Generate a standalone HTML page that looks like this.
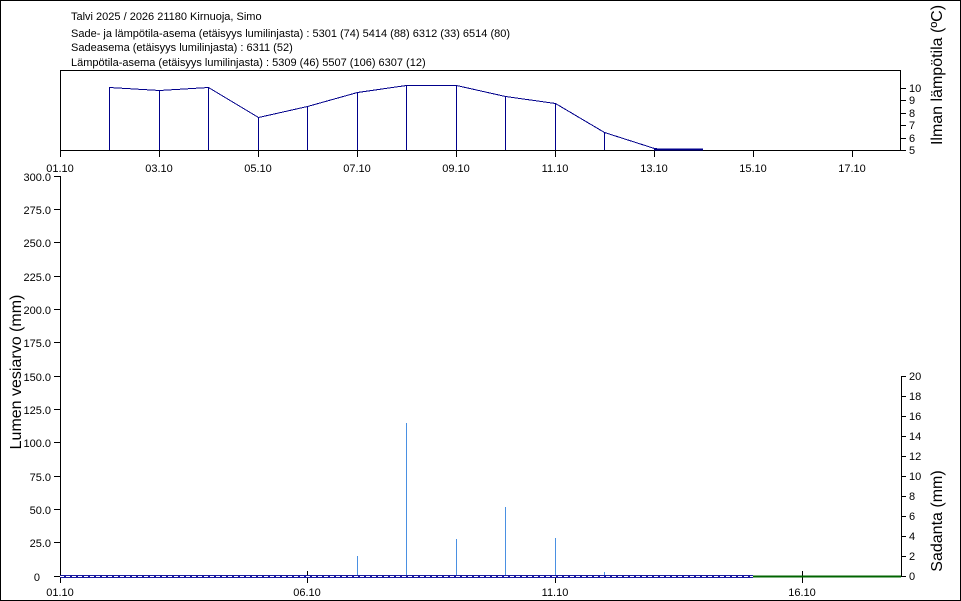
<!DOCTYPE html>
<html><head><meta charset="utf-8"><style>
html,body{margin:0;padding:0;background:#fff}
svg{display:block}
text{font-family:"Liberation Sans",sans-serif;fill:#000}
line,rect{shape-rendering:crispEdges}
</style></head><body>
<svg width="961" height="601" viewBox="0 0 961 601" xmlns="http://www.w3.org/2000/svg" font-size="11">
<rect x="0.5" y="0.5" width="960" height="600" fill="#fff" stroke="#000"/>
<g font-size="11">
<text x="71" y="20">Talvi 2025 / 2026 21180 Kirnuoja, Simo</text>
<text x="71" y="37">Sade- ja lämpötila-asema (etäisyys lumilinjasta) :  5301 (74) 5414 (88) 6312 (33) 6514 (80)</text>
<text x="71" y="51">Sadeasema (etäisyys lumilinjasta) :  6311 (52)</text>
<text x="71" y="66">Lämpötila-asema (etäisyys lumilinjasta) :  5309 (46) 5507 (106) 6307 (12)</text>
</g>
<rect x="60.5" y="70.5" width="840" height="80" fill="none" stroke="#000"/>
<g stroke="#000">
<line x1="60.5" y1="150" x2="60.5" y2="157"/><line x1="159.5" y1="150" x2="159.5" y2="157"/><line x1="258.5" y1="150" x2="258.5" y2="157"/><line x1="357.5" y1="150" x2="357.5" y2="157"/><line x1="456.5" y1="150" x2="456.5" y2="157"/><line x1="555.5" y1="150" x2="555.5" y2="157"/><line x1="654.5" y1="150" x2="654.5" y2="157"/><line x1="753.5" y1="150" x2="753.5" y2="157"/><line x1="852.5" y1="150" x2="852.5" y2="157"/>
<line x1="901" y1="88.5" x2="906" y2="88.5"/><line x1="901" y1="100.5" x2="906" y2="100.5"/><line x1="901" y1="113.5" x2="906" y2="113.5"/><line x1="901" y1="125.5" x2="906" y2="125.5"/><line x1="901" y1="138.5" x2="906" y2="138.5"/><line x1="901" y1="150.5" x2="906" y2="150.5"/>
</g>
<g text-anchor="middle">
<text x="60" y="172">01.10</text><text x="159" y="172">03.10</text><text x="258" y="172">05.10</text><text x="357" y="172">07.10</text><text x="456" y="172">09.10</text><text x="555" y="172">11.10</text><text x="654" y="172">13.10</text><text x="753" y="172">15.10</text><text x="852" y="172">17.10</text>
</g>
<g>
<text x="909" y="92">10</text><text x="909" y="104">9</text><text x="909" y="117">8</text><text x="909" y="129">7</text><text x="909" y="142">6</text><text x="909" y="154">5</text>
</g>
<g stroke="#00008b" fill="none">
<polyline shape-rendering="crispEdges" points="109.5,87.5 159.5,90.5 208.5,87.5 258.5,117.5 307.5,106.5 357.5,92.5 406.5,85.5 456.5,85.5 505.5,96.5 555.5,103.5 604.5,132.5 654.5,148.5 670,150"/>
<line x1="109.5" y1="87" x2="109.5" y2="150"/><line x1="159.5" y1="90" x2="159.5" y2="150"/><line x1="208.5" y1="87" x2="208.5" y2="150"/><line x1="258.5" y1="117" x2="258.5" y2="150"/><line x1="307.5" y1="106" x2="307.5" y2="150"/><line x1="357.5" y1="92" x2="357.5" y2="150"/><line x1="406.5" y1="85" x2="406.5" y2="150"/><line x1="456.5" y1="85" x2="456.5" y2="150"/><line x1="505.5" y1="96" x2="505.5" y2="150"/><line x1="555.5" y1="103" x2="555.5" y2="150"/><line x1="604.5" y1="132" x2="604.5" y2="150"/>
<line x1="654" y1="149.5" x2="703" y2="149.5" stroke-width="2"/>
</g>
<text transform="translate(942,75) rotate(-90)" text-anchor="middle" style="font-size:16px">Ilman lämpötila (ºC)</text>
<g stroke="#000">
<line x1="60.5" y1="176" x2="60.5" y2="583"/>
<line x1="901.5" y1="376" x2="901.5" y2="577"/>
</g>
<g stroke="#000">
<line x1="54" y1="176.5" x2="60" y2="176.5"/><line x1="54" y1="209.5" x2="60" y2="209.5"/><line x1="54" y1="242.5" x2="60" y2="242.5"/><line x1="54" y1="276.5" x2="60" y2="276.5"/><line x1="54" y1="309.5" x2="60" y2="309.5"/><line x1="54" y1="342.5" x2="60" y2="342.5"/><line x1="54" y1="376.5" x2="60" y2="376.5"/><line x1="54" y1="409.5" x2="60" y2="409.5"/><line x1="54" y1="442.5" x2="60" y2="442.5"/><line x1="54" y1="476.5" x2="60" y2="476.5"/><line x1="54" y1="509.5" x2="60" y2="509.5"/><line x1="54" y1="542.5" x2="60" y2="542.5"/><line x1="54" y1="576.5" x2="60" y2="576.5"/>
<line x1="901" y1="376.5" x2="906" y2="376.5"/><line x1="901" y1="396.5" x2="906" y2="396.5"/><line x1="901" y1="416.5" x2="906" y2="416.5"/><line x1="901" y1="436.5" x2="906" y2="436.5"/><line x1="901" y1="456.5" x2="906" y2="456.5"/><line x1="901" y1="476.5" x2="906" y2="476.5"/><line x1="901" y1="496.5" x2="906" y2="496.5"/><line x1="901" y1="516.5" x2="906" y2="516.5"/><line x1="901" y1="536.5" x2="906" y2="536.5"/><line x1="901" y1="556.5" x2="906" y2="556.5"/><line x1="901" y1="576.5" x2="906" y2="576.5"/>
<line x1="307.5" y1="571" x2="307.5" y2="583"/><line x1="555.5" y1="571" x2="555.5" y2="583"/><line x1="802.5" y1="571" x2="802.5" y2="583"/>
</g>
<g text-anchor="end">
<text x="51" y="181">300.0</text><text x="51" y="214">275.0</text><text x="51" y="247">250.0</text><text x="51" y="281">225.0</text><text x="51" y="314">200.0</text><text x="51" y="347">175.0</text><text x="51" y="381">150.0</text><text x="51" y="414">125.0</text><text x="51" y="447">100.0</text><text x="51" y="481">75.0</text><text x="51" y="514">50.0</text><text x="51" y="547">25.0</text><text x="40" y="581">0</text>
</g>
<g>
<text x="909" y="380">20</text><text x="909" y="400">18</text><text x="909" y="420">16</text><text x="909" y="440">14</text><text x="909" y="460">12</text><text x="909" y="480">10</text><text x="909" y="500">8</text><text x="909" y="520">6</text><text x="909" y="540">4</text><text x="909" y="560">2</text><text x="909" y="580">0</text>
</g>
<g text-anchor="middle">
<text x="60" y="596">01.10</text><text x="307" y="596">06.10</text><text x="555" y="596">11.10</text><text x="802" y="596">16.10</text>
</g>
<g stroke="#4a90e2">
<line x1="357.5" y1="556" x2="357.5" y2="576"/><line x1="406.5" y1="423" x2="406.5" y2="576"/><line x1="456.5" y1="539" x2="456.5" y2="576"/><line x1="505.5" y1="507" x2="505.5" y2="576"/><line x1="555.5" y1="538" x2="555.5" y2="576"/><line x1="604.5" y1="572" x2="604.5" y2="576"/>
</g>
<rect x="60" y="575" width="693" height="3" fill="#1a1aa0"/>
<line x1="60" y1="576.5" x2="753" y2="576.5" stroke="#fff" stroke-dasharray="4,2"/>
<line x1="753" y1="576.5" x2="901" y2="576.5" stroke="#006400" stroke-width="2"/>
<text transform="translate(21,372) rotate(-90)" text-anchor="middle" style="font-size:16px">Lumen vesiarvo (mm)</text>
<text transform="translate(942,521) rotate(-90)" text-anchor="middle" style="font-size:16px">Sadanta (mm)</text>
</svg>
</body></html>
